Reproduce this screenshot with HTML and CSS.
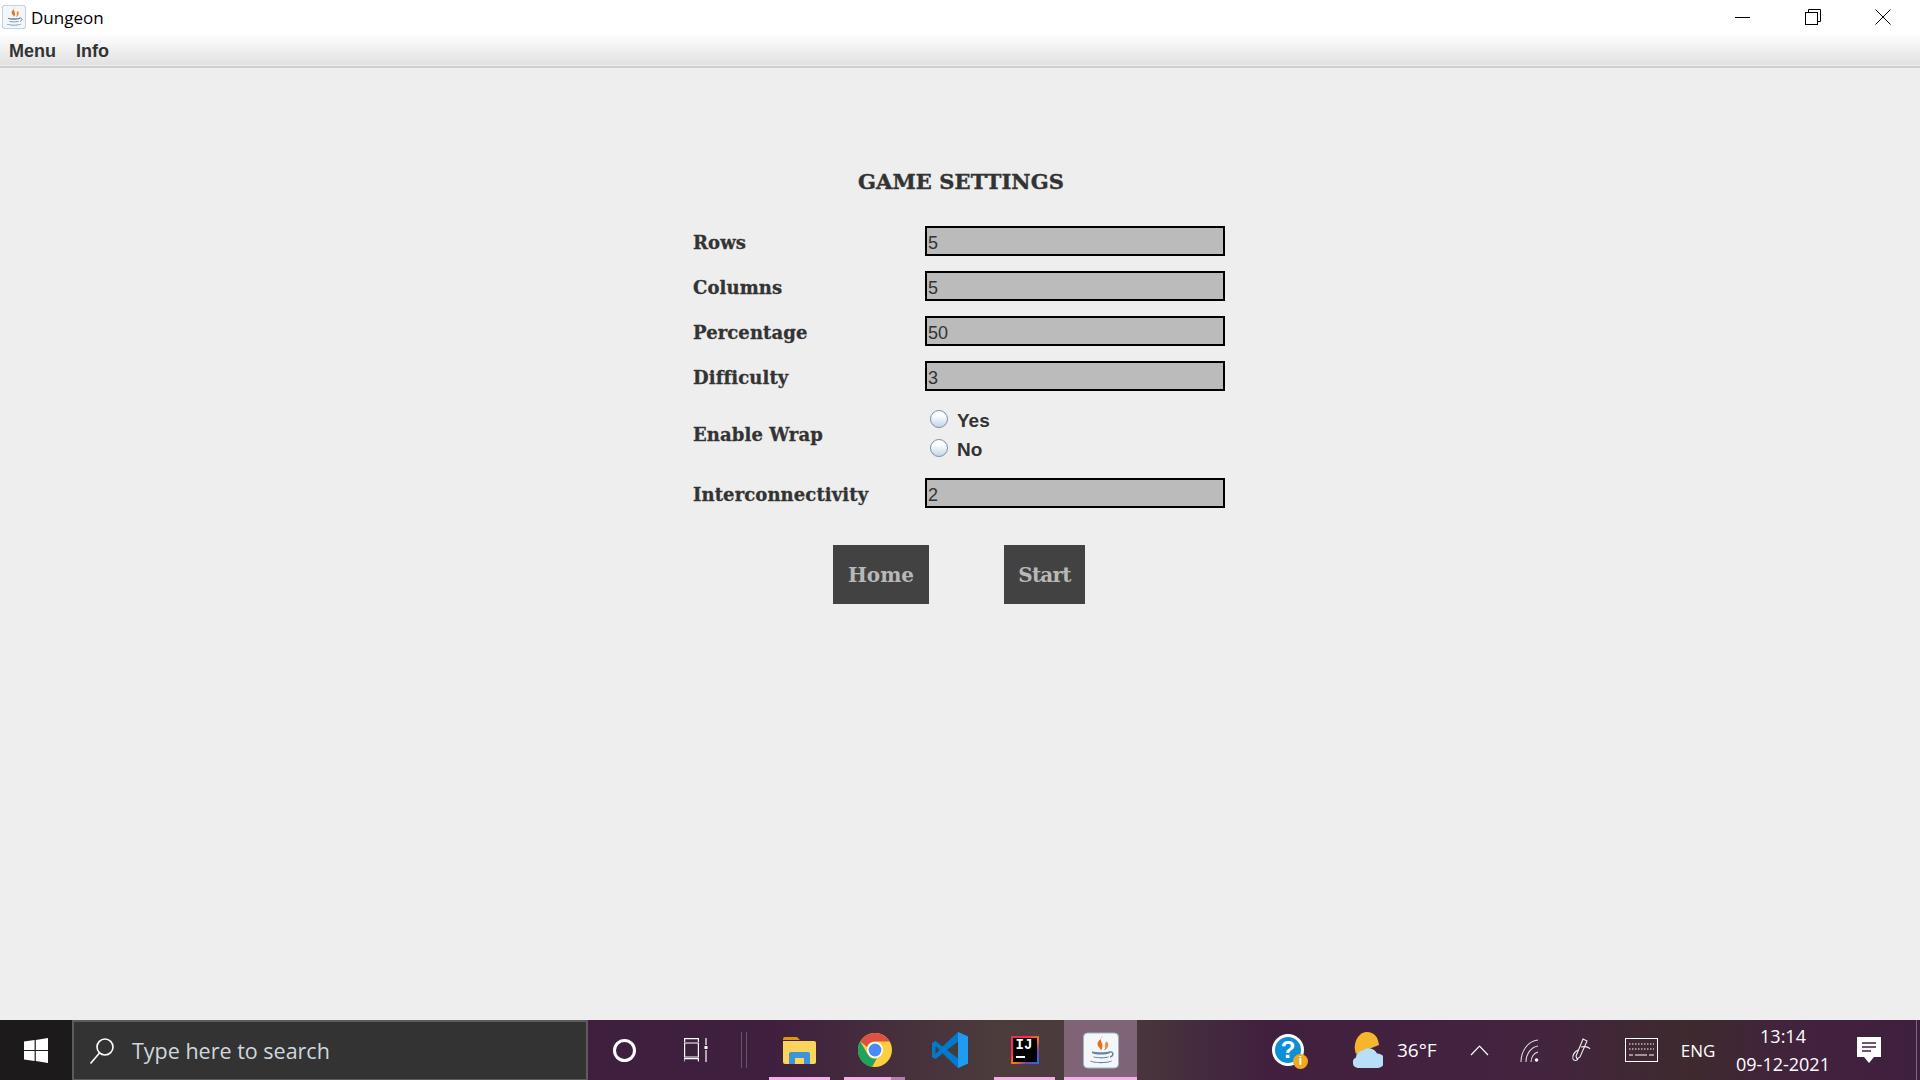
FILE: index.html
```html
<!DOCTYPE html>
<html lang="en">
<head>
  <meta charset="UTF-8" />
  <title>Dungeon</title>
  <link rel="stylesheet" href="styles.css">
</head>
<body>
  <svg class="defs" width="0" height="0">
    <symbol id="java" viewBox="0 0 36 36">
      <rect x="0.5" y="0.5" width="35" height="35" rx="4" fill="#f4f6f8" stroke="#9fb2c4" />
      <path d="M20 3c-6 5 3 8-2 15-1-4-6-5-2-10 2-2 3-3 4-5z" fill="#e76f22" />
      <path d="M24 9c-4 2 0 5-3 9 3-1 6-5 3-9z" fill="#e98b3c" />
      <path d="M9 19c4 1 14 1 18 0v1.500c-4 2-14 2-18 0z" fill="#5d86a8" />
      <path d="M10 24c4 1 12 1 16 0-.5 2.500-15.500 2.500-16 0z" fill="#5d86a8" />
      <path d="M7 28c5 2 17 2 22 0 0 3.500-22 3.500-22 0z" fill="#5d86a8" />
      <path d="M26 19.500c4.500-1 5.500 3.500 1 5" fill="none" stroke="#5d86a8" stroke-width="1.400" />
    </symbol>
  </svg>

  <div class="titlebar">
    <svg class="app-icon"><use href="#java" /></svg>
    <span class="title-text">Dungeon</span>
    <div class="win-controls">
      <svg class="win-btn" viewBox="0 0 16 16"><path d="M0 8.5h15" stroke="#000" stroke-width="1" fill="none" /></svg>
      <svg class="win-btn" viewBox="0 0 16 16"><path d="M3.5 3.5V.5h12v12h-3" stroke="#000" fill="none" /><rect x="0.5" y="3.5" width="12" height="12" stroke="#000" fill="none" /></svg>
      <svg class="win-btn" viewBox="0 0 16 16"><path d="M.5.5l15 15M15.5.5l-15 15" stroke="#000" fill="none" /></svg>
    </div>
  </div>

  <div class="menubar">
    <span class="menu-item">Menu</span>
    <span class="menu-item">Info</span>
  </div>

  <main class="content">
    <div class="settings">
      <h1>GAME SETTINGS</h1>
      <div class="form-row">
        <label>Rows</label>
        <div class="field">5</div>
      </div>
      <div class="form-row">
        <label>Columns</label>
        <div class="field">5</div>
      </div>
      <div class="form-row">
        <label>Percentage</label>
        <div class="field">50</div>
      </div>
      <div class="form-row">
        <label>Difficulty</label>
        <div class="field">3</div>
      </div>
      <div class="form-row wrap-row">
        <label>Enable Wrap</label>
        <div class="radios">
          <div class="radio"><span class="radio-dot"></span>Yes</div>
          <div class="radio"><span class="radio-dot"></span>No</div>
        </div>
      </div>
      <div class="form-row">
        <label>Interconnectivity</label>
        <div class="field">2</div>
      </div>
      <div class="buttons">
        <div class="btn btn-home">Home</div>
        <div class="btn btn-start">Start</div>
      </div>
    </div>
  </main>

  <footer class="taskbar">
    <div class="start">
      <svg width="24" height="25" viewBox="0 0 24 25"><path d="M0 3.600l10.600-1.500v9.800H0zM11.800 1.900L24 0v11.900H11.800zM0 13.100h10.600v9.800L0 21.400zM11.800 13.100H24V25l-12.200-1.900z" fill="#fff" /></svg>
    </div>
    <div class="search">
      <svg width="26" height="28" viewBox="0 0 26 28"><circle cx="16" cy="10" r="8" fill="none" stroke="#fff" stroke-width="1.600" /><path d="M10.500 16L1.500 26.500" stroke="#fff" stroke-width="1.600" /></svg>
      <span>Type here to search</span>
    </div>
    <div class="slot slot-cortana"><span class="cortana"></span></div>
    <div class="slot slot-taskview">
      <svg width="24" height="24" viewBox="0 0 24 24" fill="none" stroke="#fff" stroke-width="1.200"><path d="M0 .6h15M0 5h15M.6 5v14M14.400 5v14M0 19h15M0 23.400V20.500M0 20.600h15M14.400 20.500v3M.6 0v4M14.400 0v4M22 0v7M22 12v12" /><rect x="20.500" y="8" width="3" height="3" fill="#fff" stroke="none" /></svg>
    </div>
    <div class="divider"></div>

    <div class="app open">
      <svg width="33" height="28" viewBox="0 0 33 28"><path d="M0 3a2 2 0 0 1 2-2h12l3 3h-17z" fill="#d89a0e" /><path d="M0 5h31a2 2 0 0 1 2 2v19a2 2 0 0 1-2 2H2a2 2 0 0 1-2-2z" fill="#fbd45c" /><path d="M6 28V18a2 2 0 0 1 2-2h17a2 2 0 0 1 2 2v10h-6v-6h-9v6z" fill="#3f93d8" /></svg>
    </div>
    <div class="app open two">
      <svg width="34" height="34" viewBox="0 0 34 34"><circle cx="17" cy="17" r="17" fill="#fccf3f" /><path d="M17 0a17 17 0 0 1 14.700 8.500H17a8.500 8.500 0 0 0-8 5.500L2.300 8.500A17 17 0 0 1 17 0z" fill="#dd5044" /><path d="M2.300 8.500L9.800 21.500a8.500 8.500 0 0 0 9 4L14 34A17 17 0 0 1 2.300 8.500z" fill="#1fa260" /><circle cx="17" cy="17" r="8" fill="#fff" /><circle cx="17" cy="17" r="6.400" fill="#4a8af4" /></svg>
    </div>
    <div class="app">
      <svg width="36" height="36" viewBox="0 0 36 36"><path d="M26 0l10 4.500v27L26 36 10.500 21.500 3.500 27 0 25V11l3.500-2 7 5.500z" fill="#007acc" /><path d="M26 0l10 4.500v27L26 36z" fill="#1f9cf0" /><path d="M26 9.500L15 18l11 8.500z" fill="#453a3c" /><path d="M3.500 14l4 4-4 4z" fill="#453a3c" /></svg>
    </div>
    <div class="app open">
      <div class="ij-icon"><div class="ij-inner"><span class="ij-text">IJ</span><span class="ij-bar"></span></div></div>
    </div>
    <div class="app app-active open">
      <svg width="36" height="37"><use href="#java" /></svg>
    </div>

    <div class="tray">
      <div class="help">
        <span class="help-q">?</span>
        <span class="help-i">i</span>
      </div>
      <div class="weather">
        <svg width="30" height="36" viewBox="0 0 30 36"><path d="M3 22C-1 12 5 0 14 0c7 0 11 5 12 13z" fill="#f6b52a" /><path d="M5 36a5.500 5.500 0 0 1-2-10.500 7 7 0 0 1 7-7 9 9 0 0 1 14 3 6 6 0 0 1 1 14.500z" fill="#b8dff5" /></svg>
        <span>36°F</span>
      </div>
      <div class="tray-slot chevron">
        <svg width="19" height="11" viewBox="0 0 19 11"><path d="M1 10l8.500-9 8.500 9" fill="none" stroke="#fff" stroke-width="1.200" /></svg>
      </div>
      <div class="tray-slot wifi">
        <svg width="19" height="23" viewBox="0 0 19 23" fill="none" stroke="#ddd" stroke-width="1.100"><path d="M1 23C1 12 8 2 18 1M6 23C6 15 11 8 18 7M11 23c0-5 3-9 7-10" /><circle cx="16.500" cy="21" r="1.800" fill="#fff" stroke="none" /></svg>
      </div>
      <div class="tray-slot pen">
        <svg width="20" height="24" viewBox="0 0 20 24" fill="none" stroke="#eee" stroke-width="1.100"><path d="M12 1l4 2-7 16-3 2-1-3z" /><path d="M10 9c4-1 8 0 9 2M7 12c-4 2-6 6-5 9 1 2 4 2 5 0" /></svg>
      </div>
      <div class="tray-slot keyboard">
        <svg width="33" height="24" viewBox="0 0 33 24" fill="none" stroke="#fff"><rect x="0.500" y="0.500" width="32" height="23" /><path d="M4 6h25M4 11h25" stroke-dasharray="1.500 1.500" /><path d="M4 17h4M10 17h12M24 17h5" /></svg>
      </div>
      <div class="tray-slot eng">ENG</div>
      <div class="clock">
        <span>13:14</span>
        <span>09-12-2021</span>
      </div>
      <div class="tray-slot notify">
        <svg width="24" height="27" viewBox="0 0 24 27"><path d="M0 0h24v20h-7l-5 6-5-6H0z" fill="#fff" /><path d="M5 6h14M5 10h14M5 14h9" stroke="#3f2040" stroke-width="1.300" /></svg>
      </div>
      <div class="show-desktop"></div>
    </div>
  </footer>
</body>
</html>
```

FILE: styles.css
```css
* {
  box-sizing: border-box;
}
html, body {
  margin: 0;
  padding: 0;
  height: 1080px;
  overflow: hidden;
}
body {
  display: flex;
  flex-direction: column;
  background: #eee;
  font-family: "Liberation Sans", sans-serif;
}
.defs {
  position: absolute;
}

/* window chrome */
.titlebar {
  height: 33px;
  background: #fff;
  display: flex;
  align-items: center;
  padding-left: 2px;
}
.app-icon {
  width: 24px;
  height: 24px;
}
.title-text {
  margin-left: 5px;
  padding-top: 2px;
  font-family: "Open Sans", sans-serif;
  font-size: 17px;
  color: #000;
}
.win-controls {
  margin-left: auto;
  display: flex;
  gap: 54px;
  padding: 0 29px 0 0;
}
.win-btn {
  width: 16px;
  height: 16px;
}
.menubar {
  height: 35px;
  padding: 3px 0 0 9px;
  display: flex;
  align-items: center;
  gap: 20px;
  background: linear-gradient(#fff, #e0e0e0);
  border-bottom: 2px solid #cfcfcf;
  box-shadow: inset 0 -1px 0 #eee;
}
.menu-item {
  font-size: 18px;
  font-weight: bold;
  color: #333;
}

/* settings form */
.content {
  flex: 1;
  display: flex;
  justify-content: center;
  padding-top: 98px;
}
.settings {
  width: 536px;
}
h1 {
  margin: 0 0 30px;
  padding-left: 2px;
  height: 30px;
  line-height: 32px;
  text-align: center;
  font-family: "DejaVu Serif", serif;
  font-size: 21px;
  font-weight: bold;
  letter-spacing: 0.1px;
  -webkit-text-stroke: 0.4px #333;
  color: #333;
}
.form-row {
  display: flex;
  align-items: center;
  height: 30px;
  margin-bottom: 15px;
}
label {
  width: 233px;
  padding: 2px 0 0 1px;
  font-family: "DejaVu Serif", serif;
  font-size: 18px;
  font-weight: bold;
  letter-spacing: 0.1px;
  -webkit-text-stroke: 0.3px #333;
  color: #333;
}
.field {
  width: 300px;
  height: 30px;
  padding-left: 1px;
  background: #bbb;
  border: 2px solid #000;
  font-size: 18px;
  line-height: 30px;
  color: #333;
}
.wrap-row {
  height: 87px;
  margin: -15px 0 0;
}
.wrap-row label {
  padding-top: 0;
}
.radios {
  padding: 1px 0 0 5px;
  display: flex;
  flex-direction: column;
  gap: 8px;
}
.radio {
  display: flex;
  align-items: center;
  gap: 9px;
  height: 21px;
  font-size: 19px;
  font-weight: bold;
  color: #333;
}
.radio-dot {
  width: 18px;
  height: 18px;
  margin-top: -3px;
  border-radius: 50%;
  border: 1px solid #7b90a8;
  background: linear-gradient(#fff 25%, #c5d5e8);
}
.buttons {
  display: flex;
  justify-content: center;
  gap: 75px;
  margin-top: 37px;
  padding-right: 2px;
}
.btn {
  height: 59px;
  line-height: 60px;
  text-align: center;
  background: #424242;
  font-family: "DejaVu Serif", serif;
  font-size: 20px;
  font-weight: bold;
  color: #b8b8b8;
}
.btn-home {
  width: 96px;
}
.btn-start {
  width: 81px;
  letter-spacing: -0.8px;
}

/* windows taskbar */
.taskbar {
  height: 60px;
  display: flex;
  align-items: stretch;
  color: #fff;
  font-family: "Open Sans", sans-serif;
  background: linear-gradient(90deg, #3f1f3e 0%, #3f1f3e 40%, #4c3c3c 52%, #4a3a3c 58%, #40203e 66%, #43243f 80%, #3e2a2e 88%, #42223e 94%, #3e1f3d 100%);
}
.start {
  width: 72px;
  display: flex;
  align-items: center;
  justify-content: center;
  background: #1d1a1c;
}
.search {
  width: 516px;
  display: flex;
  align-items: center;
  gap: 17px;
  padding-left: 15px;
  background: #333;
  border: 2px solid #5c5c5c;
  border-bottom-width: 1px;
  font-size: 21.5px;
  color: #cfd8de;
}
.slot {
  width: 72px;
  display: flex;
  align-items: center;
  justify-content: center;
}
.cortana {
  width: 23px;
  height: 23px;
  border-radius: 50%;
  border: 3px solid #fff;
}
.divider {
  width: 6px;
  height: 36px;
  margin: 12px 22px 0 9px;
  border-left: 1px solid #6b5468;
  border-right: 1px solid #6b5468;
}
.app {
  width: 61px;
  margin-right: 14px;
  display: flex;
  align-items: center;
  justify-content: center;
}
.app.open {
  background: linear-gradient(#f4aee8, #f4aee8) bottom / 100% 3px no-repeat;
}
.app.two {
  background: linear-gradient(#f4aee8, #f4aee8) bottom left / 47px 3px no-repeat, linear-gradient(#b27fae, #b27fae) bottom / 100% 3px no-repeat;
}
.app-active {
  width: 73px;
  margin: 0 0 0 -5px;
  background-color: #7f6475 !important;
}
.ij-icon {
  width: 28px;
  height: 28px;
  padding: 2px;
  background: linear-gradient(135deg, #fe2857 0%, #fe2857 30%, #f97a12 55%, #7b3fb5 75%, #087cfa 100%);
}
.ij-inner {
  width: 24px;
  height: 24px;
  padding: 1px 0 0 3px;
  background: #000;
  display: flex;
  flex-direction: column;
}
.ij-text {
  font-family: "Liberation Mono", monospace;
  font-size: 14px;
  line-height: 13px;
  font-weight: bold;
  color: #fff;
}
.ij-bar {
  width: 9px;
  height: 2px;
  margin-top: 4px;
  background: #fff;
}
.tray {
  margin-left: auto;
  display: flex;
  align-items: center;
}
.help {
  position: relative;
  width: 32px;
  height: 32px;
  margin: 0 39px 0 8px;
  border-radius: 50%;
  background: #0b8fd6;
  border: 3px solid #fff;
  text-align: center;
  font-family: "Liberation Sans", sans-serif;
  font-size: 24px;
  line-height: 26px;
  font-weight: bold;
}
.help-i {
  position: absolute;
  right: -7px;
  bottom: -6px;
  width: 15px;
  height: 15px;
  border-radius: 50%;
  background: #f2a81d;
  font-size: 12px;
  line-height: 15px;
}
.weather {
  width: 118px;
  padding-left: 10px;
  display: flex;
  align-items: center;
  gap: 14px;
  font-size: 19px;
}
.tray-slot {
  display: flex;
  align-items: center;
  justify-content: center;
}
.chevron {
  width: 36px;
}
.wifi {
  width: 64px;
}
.pen {
  width: 40px;
}
.keyboard {
  width: 80px;
}
.eng {
  width: 34px;
  font-size: 17px;
}
.clock {
  width: 136px;
  display: flex;
  flex-direction: column;
  align-items: center;
  gap: 4px;
  font-size: 18px;
  line-height: 24px;
}
.notify {
  width: 36px;
}
.show-desktop {
  width: 33px;
  height: 60px;
  position: relative;
}
.show-desktop::after {
  content: "";
  position: absolute;
  right: 3px;
  top: 0;
  width: 1px;
  height: 60px;
  background: #7d6a7a;
}
```
